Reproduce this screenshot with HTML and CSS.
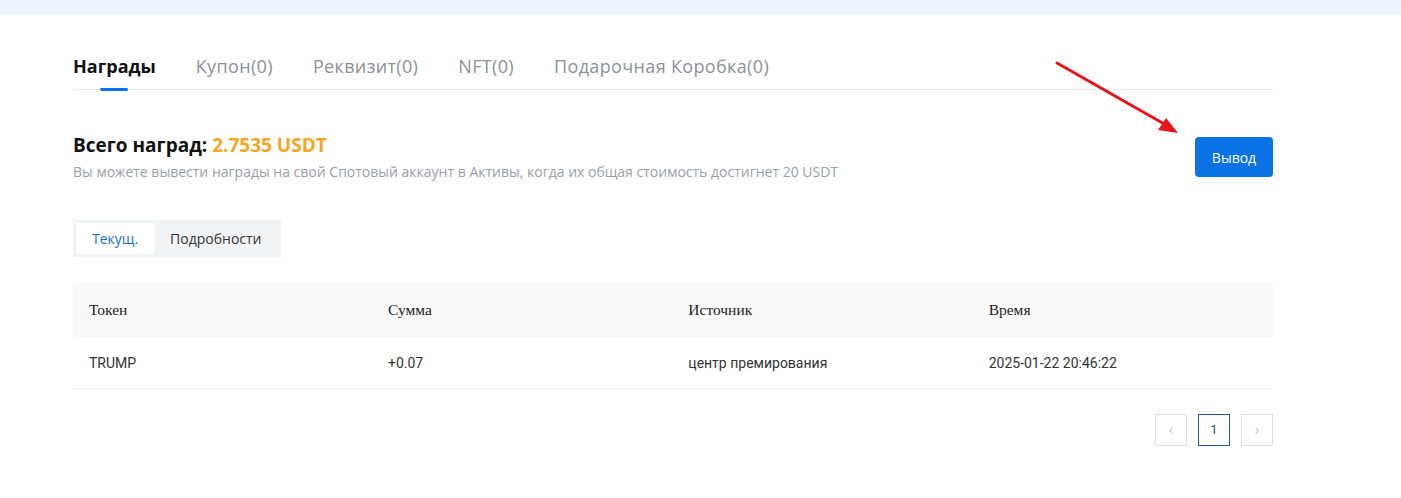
FILE: index.html
```html
<!DOCTYPE html>
<html lang="ru">
<head>
<meta charset="UTF-8" />
<meta name="viewport" content="width=device-width, initial-scale=1" />
<title>Награды</title>
<link rel="stylesheet" href="styles.css">
</head>
<body>

<div class="topband"></div>

<div class="page">
  <ul class="tabs">
    <li class="tab active">Награды</li>
    <li class="tab">Купон(0)</li>
    <li class="tab">Реквизит(0)</li>
    <li class="tab">NFT(0)</li>
    <li class="tab">Подарочная Коробка(0)</li>
  </ul>

  <div class="summary">
    <div>
      <h3 class="total">Всего наград: <span class="amount">2.7535 USDT</span></h3>
      <p class="hint">Вы можете вывести награды на свой Спотовый аккаунт в Активы, когда их общая стоимость достигнет 20 USDT</p>
    </div>
    <button class="withdraw-btn">Вывод</button>
  </div>

  <div class="segment">
    <span class="seg-item active">Текущ.</span>
    <span class="seg-item">Подробности</span>
  </div>

  <table class="rewards">
    <thead>
      <tr>
        <th>Токен</th>
        <th>Сумма</th>
        <th>Источник</th>
        <th>Время</th>
      </tr>
    </thead>
    <tbody>
      <tr>
        <td>TRUMP</td>
        <td>+0.07</td>
        <td>центр премирования</td>
        <td>2025-01-22 20:46:22</td>
      </tr>
    </tbody>
  </table>

  <div class="pager">
    <span class="page-btn disabled">&lsaquo;</span>
    <span class="page-btn current">1</span>
    <span class="page-btn disabled">&rsaquo;</span>
  </div>

  <!-- annotation arrow -->
  <svg class="arrow" width="140" height="90" viewBox="0 0 140 90">
    <line x1="3" y1="3" x2="112" y2="65" stroke="#e8141b" stroke-width="3" stroke-linecap="round"/>
    <polygon points="124,73 104,70 112,58" fill="#e8141b"/>
  </svg>
</div>

</body>
</html>
```

FILE: styles.css
```css
body {
  margin: 0;
  background: #fff;
  font-family: "Open Sans", Arial, sans-serif;
  color: #121212;
}

.topband {
  height: 15px;
  background-color: #f0f6fd;
}

.page {
  position: relative;
  width: 1200px;
  margin-left: 73px;
  padding-top: 1px;
}

/* tabs */
.tabs {
  display: flex;
  gap: 40px;
  list-style: none;
  margin: 38px 0 0;
  padding: 0;
  border-bottom: 1px solid #e6e8eb;
}

.tab {
  position: relative;
  font-size: 18px;
  line-height: 24px;
  padding-bottom: 11px;
  color: #8c9099;
  letter-spacing: 0.35px;
}

.tab.active {
  color: #121212;
  font-weight: 700;
  letter-spacing: 0;
}

.tab.active::after {
  content: "";
  position: absolute;
  left: 50%;
  bottom: -2px;
  width: 28px;
  height: 3px;
  margin-left: -14px;
  border-radius: 2px;
  background-color: #0b72e6;
}

/* summary */
.summary {
  display: flex;
  justify-content: space-between;
  align-items: center;
  margin-top: 43px;
}

.total {
  margin: 0;
  font-size: 19px;
  line-height: 24px;
  font-weight: 700;
  color: #121212;
}

.amount {
  color: #f5a623;
}

.hint {
  margin: 6px 0 0;
  font-size: 14px;
  line-height: 18px;
  color: #9a9ea7;
}

.withdraw-btn {
  width: 78px;
  height: 40px;
  border: none;
  border-radius: 4px;
  background-color: #0b72e6;
  color: #fff;
  font-family: "Open Sans", Arial, sans-serif;
  font-size: 14px;
  cursor: pointer;
}

/* segmented control */
.segment {
  display: inline-flex;
  margin-top: 39px;
  padding: 3px;
  background-color: #f2f3f5;
}

.seg-item {
  height: 31px;
  line-height: 31px;
  padding: 0 16px;
  font-size: 14px;
  color: #333;
}

.seg-item.active {
  background-color: #fff;
  color: #1a6fc9;
}

/* table */
.rewards {
  width: 100%;
  margin-top: 26px;
  border-collapse: collapse;
  table-layout: fixed;
}

.rewards th {
  height: 54px;
  padding: 0 16px;
  text-align: left;
  font-family: "Liberation Serif", "Times New Roman", serif;
  font-weight: 400;
  font-size: 15.5px;
  color: #222;
  background-color: #f9f9f9;
}

.rewards th:first-child,
.rewards td:first-child {
  width: 267px;
}

.rewards td {
  height: 51px;
  padding: 0 16px;
  font-family: Roboto, Arial, sans-serif;
  font-size: 14px;
  color: #333;
  border-bottom: 1px solid #f4f4f4;
}

/* pagination */
.pager {
  display: flex;
  justify-content: flex-end;
  gap: 11px;
  margin-top: 25px;
}

.page-btn {
  box-sizing: border-box;
  width: 32px;
  height: 32px;
  line-height: 30px;
  text-align: center;
  border: 1px solid #dcdfe4;
  font-family: Roboto, Arial, sans-serif;
  font-size: 13px;
  color: #1d4f86;
}

.page-btn.disabled {
  color: #c4c7cc;
  font-size: 16px;
}

.page-btn.current {
  border-color: #1d5a99;
}

.arrow {
  position: absolute;
  left: 981px;
  top: 45px;
  pointer-events: none;
}
```
